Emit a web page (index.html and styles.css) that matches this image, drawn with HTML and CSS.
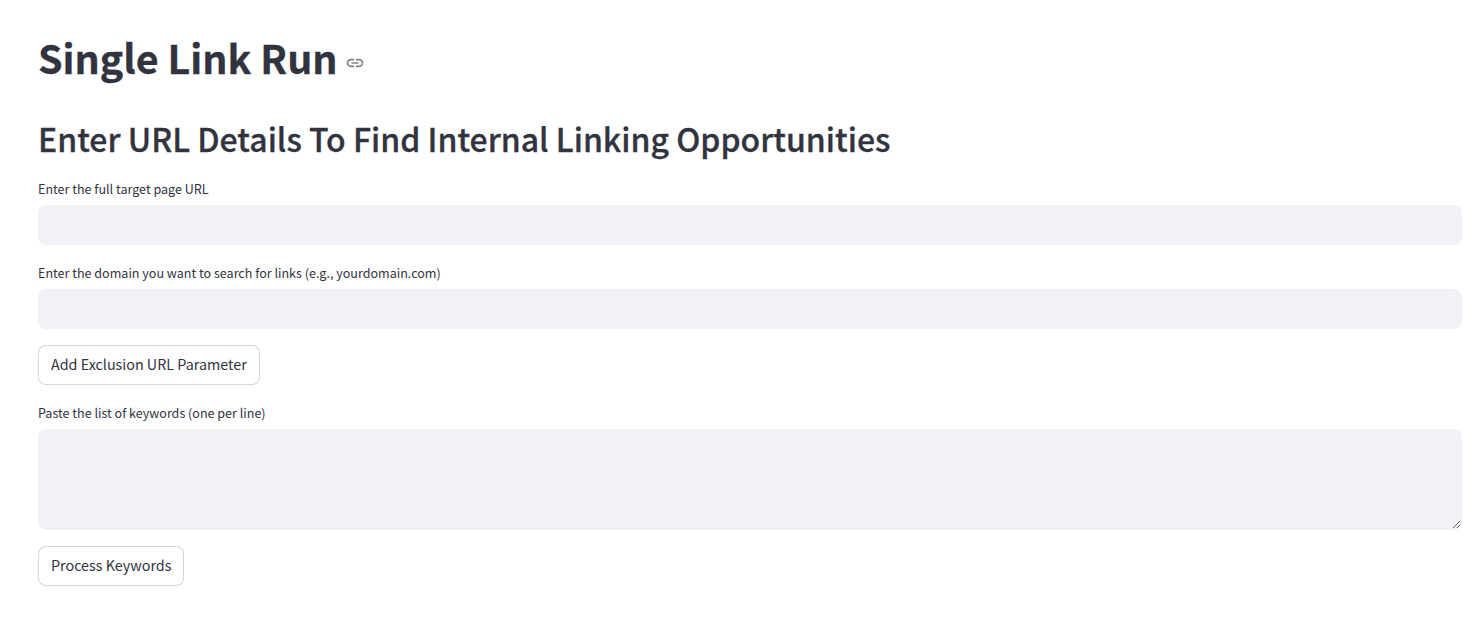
FILE: index.html
```html
<!DOCTYPE html>
<html lang="en">
<head>
  <meta charset="UTF-8">
  <meta name="viewport" content="width=device-width, initial-scale=1.0">
  <title>Single Link Run</title>
  <link rel="stylesheet" href="styles.css">
</head>
<body>
  <main class="block">
    <div class="title-row">
      <h1>Single Link Run</h1>
      <a class="anchor" href="#">
        <svg viewBox="0 0 24 24"><path d="M17 7h-4v2h4c1.65 0 3 1.35 3 3s-1.35 3-3 3h-4v2h4c2.76 0 5-2.24 5-5s-2.24-5-5-5zm-6 8H7c-1.65 0-3-1.35-3-3s1.35-3 3-3h4V7H7c-2.76 0-5 2.24-5 5s2.24 5 5 5h4v-2zm-3-4h8v2H8z"/></svg>
      </a>
    </div>

    <h2>Enter URL Details To Find Internal Linking Opportunities</h2>

    <div class="field">
      <label for="target">Enter the full target page URL</label>
      <input id="target" type="text">
    </div>

    <div class="field">
      <label for="domain">Enter the domain you want to search for links (e.g., yourdomain.com)</label>
      <input id="domain" type="text">
    </div>

    <button class="btn" type="button">Add Exclusion URL Parameter</button>

    <div class="field">
      <label for="keywords">Paste the list of keywords (one per line)</label>
      <textarea id="keywords"></textarea>
    </div>

    <button class="btn" type="button">Process Keywords</button>
  </main>
</body>
</html>
```

FILE: styles.css
```css
html, body {
  margin: 0;
  padding: 0;
}

body {
  background: #fff;
  color: #31333f;
  font-family: "Noto Sans CJK SC", "Noto Sans", sans-serif;
  overflow: hidden;
}

.block {
  display: flex;
  flex-direction: column;
  align-items: flex-start;
  gap: 16px;
  padding: 36px 17px 0 38px;
}

.title-row {
  display: flex;
  align-items: center;
  gap: 8px;
  height: 48px;
}

h1 {
  margin: 0 0 6px;
  font-size: 39.4px;
  font-weight: 700;
  line-height: 42px;
  -webkit-text-stroke: 0.3px #31333f;
}

.anchor {
  display: flex;
  color: rgba(49, 51, 63, 0.6);
  margin: 5px 0 0 -1px;
}

.anchor svg {
  width: 20px;
  height: 20px;
  fill: currentColor;
}

h2 {
  margin: 16px 0 1px;
  font-size: 32px;
  font-weight: 500;
  line-height: 44px;
  -webkit-text-stroke: 0.3px #31333f;
}

.field {
  display: flex;
  flex-direction: column;
  align-self: stretch;
}

.field label {
  font-size: 12.55px;
  line-height: 20px;
  padding-top: 2px;
  margin-bottom: 6px;
}

.field input,
.field textarea {
  display: block;
  box-sizing: border-box;
  width: 100%;
  border: 1px solid #f0f2f6;
  border-radius: 8px;
  background: #f0f2f6;
  color: #31333f;
  font: inherit;
  outline: none;
}

.field input {
  height: 40px;
  padding: 0 14px;
}

.field textarea {
  height: 101px;
  padding: 8px 14px;
  resize: vertical;
}

.btn {
  box-sizing: border-box;
  height: 40px;
  padding: 0 12px 3px;
  background: #fff;
  border: 1px solid rgba(49, 51, 63, 0.2);
  border-radius: 8px;
  color: #31333f;
  font-family: inherit;
  font-size: 14.33px;
  cursor: pointer;
}
```
